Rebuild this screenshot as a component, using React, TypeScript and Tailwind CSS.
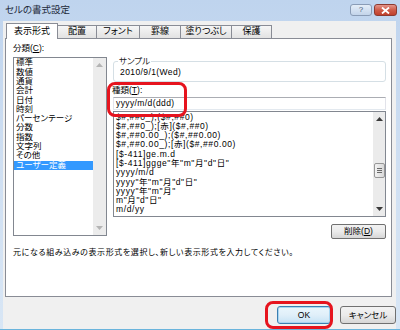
import React from "react";

const categories = [
  "標準",
  "数値",
  "通貨",
  "会計",
  "日付",
  "時刻",
  "パーセンテージ",
  "分数",
  "指数",
  "文字列",
  "その他",
  "ユーザー定義",
];

const formats = [
  '$#,##0_);($#,##0)',
  '$#,##0_);[赤]($#,##0)',
  '$#,##0.00_);($#,##0.00)',
  '$#,##0.00_);[赤]($#,##0.00)',
  "[$-411]ge.m.d",
  '[$-411]ggge"年"m"月"d"日"',
  "yyyy/m/d",
  'yyyy"年"m"月"d"日"',
  'yyyy"年"m"月"',
  'm"月"d"日"',
  "m/d/yy",
];

const tabs = [
  { label: "配置", w: "w-[40px]" },
  { label: "フォント", w: "w-[44px]" },
  { label: "罫線", w: "w-[42px]" },
  { label: "塗りつぶし", w: "w-[52px]" },
  { label: "保護", w: "w-[41px]" },
];

function Arrow({ up, color }: { up?: boolean; color: string }) {
  return (
    <svg width="7" height="4" viewBox="0 0 7 4">
      <path d={up ? "M0 4 L3.5 0 L7 4 Z" : "M0 0 L3.5 4 L7 0 Z"} fill={color} />
    </svg>
  );
}

export default function App() {
  return (
    <div className="relative w-[400px] h-[330px] overflow-hidden flex flex-col bg-gradient-to-b from-[#bfd4ee] via-[#cfdff2] to-[#d8e6f5] border-b border-[#6ab4dc] font-['Liberation_Sans','Noto_Sans_CJK_JP',sans-serif] [font-feature-settings:'palt'] text-[8.5px] text-black">
      {/* タイトルバー */}
      <div className="h-[21px] flex items-start justify-between pl-[5px] pr-[3px]">
        <span className="mt-[3px] text-[9.5px] leading-[13px] text-[#1e2a3a]">セルの書式設定</span>
        <div className="flex gap-[2px] mt-[4px]">
          <div className="w-[22px] h-[12px] rounded-[3px] border border-[#8a9cb6] bg-gradient-to-b from-[#e4edf8] to-[#c3d4ea] flex items-center justify-center text-[8px] leading-none text-[#4c5d78]">
            ?
          </div>
          <div className="w-[23px] h-[12px] rounded-[3px] border border-[#8c3a30] bg-gradient-to-b from-[#e3948a] via-[#cf5b48] to-[#c0402c] flex items-center justify-center">
            <svg width="9" height="7" viewBox="0 0 9 7">
              <path d="M1 0.5 L8 6.5 M8 0.5 L1 6.5" stroke="#fff" strokeWidth="1.8" />
            </svg>
          </div>
        </div>
      </div>

      {/* クライアント領域 */}
      <div className="flex-1 ml-[3px] mr-[4px] bg-[#f0f0f0] pt-[2px] pl-[2px] flex flex-col">
        {/* タブ */}
        <div className="h-[15px] flex items-end pl-[1px]">
          <div className="relative z-10 -mb-px w-[52px] h-[16px] bg-white border border-b-0 border-[#898c95] flex items-center justify-center text-[9px]">
            表示形式
          </div>
          {tabs.map((t) => (
            <div
              key={t.label}
              className={`${t.w} -ml-px h-[13px] border border-b-0 border-[#898c95] bg-gradient-to-b from-[#f6f6f6] to-[#e2e2e2] flex items-center justify-center text-[9px]`}
            >
              {t.label}
            </div>
          ))}
        </div>

        {/* パネル */}
        <div className="w-[387px] h-[259px] border border-[#898c95] bg-white pt-[4px] pl-[7px] pr-[5px] flex flex-col">
          <div className="flex gap-[6px]">
            {/* 分類 */}
            <div className="w-[94px] flex flex-col">
              <div className="h-[14px] leading-[10px]">
                分類(<span className="underline">C</span>):
              </div>
              <div className="h-[179px] border border-[#828790] flex">
                <div className="flex-1 pt-[0.4px]">
                  {categories.map((c) => (
                    <div
                      key={c}
                      className={`h-[9.3px] leading-[9.3px] pl-[2px] whitespace-nowrap ${
                        c === "ユーザー定義" ? "bg-[#3399ff] text-white" : ""
                      }`}
                    >
                      {c}
                    </div>
                  ))}
                </div>
                <div className="w-[13px] bg-[#ececec] flex flex-col items-center justify-between py-[5px]">
                  <Arrow up color="#b4b4b4" />
                  <Arrow color="#b4b4b4" />
                </div>
              </div>
            </div>

            {/* 右側 */}
            <div className="flex-1 flex flex-col mt-[12px]">
              <fieldset className="border border-[#d5dfe5] rounded-[3px] px-[3px] pb-0">
                <legend className="ml-[1px] px-[1px] leading-[12px] text-[#222]">サンプル</legend>
                <div className="h-[14px] leading-[10px] pl-[3px] tracking-[0.4px]">2010/9/1(Wed)</div>
              </fieldset>
              <div className="mt-[2px] h-[13px] leading-[13px] -ml-[1px]">
                種類(<span className="underline">T</span>):
              </div>
              <div className="h-[13px] border border-[#abadb3] border-b-[#e3e9ef] border-x-[#e2e3ea] leading-[11px] pl-[2px] tracking-[0.4px]">
                yyyy/m/d(ddd)
              </div>
              <div className="mt-[1px] h-[106px] border border-[#828790] flex">
                <div className="flex-1 pt-[0.5px] overflow-hidden tracking-[0.6px]">
                  {formats.map((f) => (
                    <div key={f} className="h-[9.3px] leading-[9.3px] pl-[2px] whitespace-nowrap">
                      {f}
                    </div>
                  ))}
                </div>
                <div className="w-[12px] bg-[#ebebeb] flex flex-col items-center py-[5px]">
                  <Arrow up color="#3a3a3a" />
                  <div className="mt-[42px] w-[11px] h-[15px] rounded-[2px] border border-[#979797] bg-gradient-to-r from-[#f3f3f3] to-[#d9d9d9] flex flex-col items-center justify-center gap-[1px]">
                    <div className="w-[5px] h-px bg-[#6a6a6a]" />
                    <div className="w-[5px] h-px bg-[#6a6a6a]" />
                    <div className="w-[5px] h-px bg-[#6a6a6a]" />
                  </div>
                  <div className="flex-1" />
                  <Arrow color="#3a3a3a" />
                </div>
              </div>
              <div className="mt-[7px] self-end w-[55px] h-[15px] rounded-[2px] border border-[#707070] bg-gradient-to-b from-[#f2f2f2] via-[#ebebeb] to-[#d6d6d6] flex items-center justify-center">
                削除(<span className="underline">D</span>)
              </div>
            </div>
          </div>
          <div className="mt-[8px] leading-[12px] whitespace-nowrap text-[8px] tracking-[0.6px]">
            元になる組み込みの表示形式を選択し、新しい表示形式を入力してください。
          </div>
        </div>

        {/* ボタン */}
        <div className="mt-[9px] flex justify-end gap-[9px]">
          <div className="w-[54px] h-[18px] rounded-[3px] border border-[#3c7fb1] bg-gradient-to-b from-[#eaf6fd] via-[#e0eff9] to-[#c6e2f6] shadow-[inset_0_0_0_1px_#a8d6f2] flex items-center justify-center">
            OK
          </div>
          <div className="w-[56px] h-[18px] rounded-[3px] border border-[#707070] bg-gradient-to-b from-[#f2f2f2] via-[#ebebeb] to-[#d6d6d6] flex items-center justify-center">
            キャンセル
          </div>
        </div>
      </div>

      {/* 赤枠の注釈 */}
      <div className="absolute left-[107px] top-[82px] w-[80px] h-[35px] border-[3px] border-[#e6141e] rounded-[8px]" />
      <div className="absolute left-[265px] top-[301px] w-[68px] h-[28px] border-[3px] border-[#e6141e] rounded-[8px]" />
    </div>
  );
}
